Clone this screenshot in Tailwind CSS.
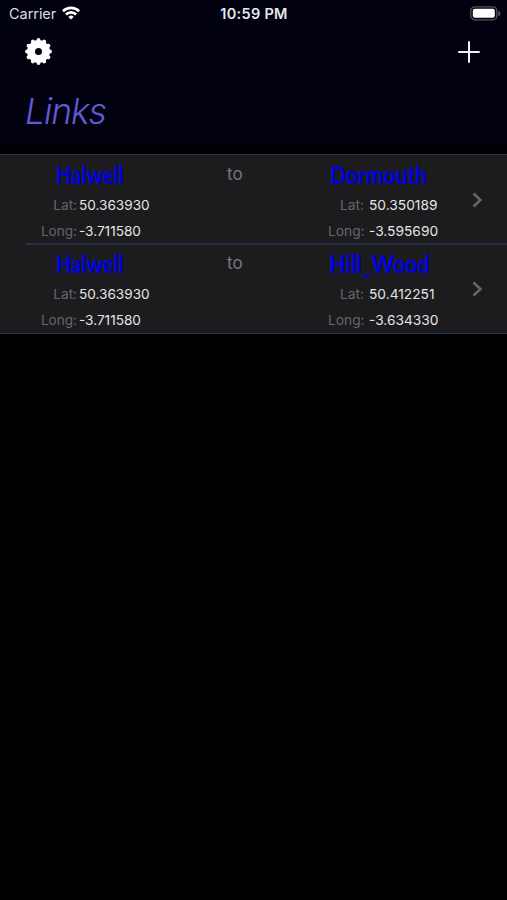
<!DOCTYPE html>
<html lang="en">
<head>
    <meta charset="UTF-8">
    <meta name="viewport" content="width=device-width, initial-scale=1.0">
    <title>Links</title>
    <script src="https://cdn.jsdelivr.net/npm/@tailwindcss/browser@4"></script>
</head>
<body class="bg-black min-h-screen overflow-hidden font-['Inter',sans-serif] text-white">
    <!-- Header -->
    <header class="bg-[#01010f] h-36">
        <!-- Status bar -->
        <div class="grid grid-cols-3 items-center h-7 pl-[9px] pr-[6px]">
            <div class="flex items-center gap-[6px]">
                <span class="text-[14.5px] leading-7 text-[#dcdce2] tracking-[-0.05px]">Carrier</span>
                <svg class="w-[18px] h-[14px] -mt-[2px]" viewBox="0 0 18 14" fill="none" stroke="white" stroke-width="2.6">
                    <path d="M0.9 5.2a11.6 11.6 0 0 1 16.2 0" />
                    <path d="M3.9 8.5a7.2 7.2 0 0 1 10.2 0" />
                    <path d="M9 13.6L6.3 10.9a3.8 3.8 0 0 1 5.4 0z" fill="white" stroke="none" />
                </svg>
            </div>
            <span class="text-center -ml-[2px] text-[14.5px] leading-7 font-semibold text-[#e8e8ee] tracking-[0.3px] whitespace-nowrap">10:59 PM</span>
            <svg class="w-[31px] h-[15px] justify-self-end -mt-[1px]" viewBox="0 0 31 15">
                <rect x="0.8" y="0.8" width="26" height="13" rx="4" fill="none" stroke="#55555f" stroke-width="1.3" />
                <rect x="2.8" y="2.8" width="22" height="9" rx="2" fill="white" />
                <path d="M28.3 4.8c3 1 3 4.4 0 5.4z" fill="#55555f" />
            </svg>
        </div>

        <!-- Toolbar -->
        <div class="flex items-center justify-between h-12 pl-[25px] pr-[27px]">
            <svg class="w-[27px] h-[27px] -mt-[2px]" viewBox="-13.5 -13.5 27 27">
                <g stroke="white" stroke-width="3.8" stroke-linecap="round">
                    <path d="M0 -11.5V11.5" />
                    <path d="M0 -11.5V11.5" transform="rotate(30)" />
                    <path d="M0 -11.5V11.5" transform="rotate(60)" />
                    <path d="M0 -11.5V11.5" transform="rotate(90)" />
                    <path d="M0 -11.5V11.5" transform="rotate(120)" />
                    <path d="M0 -11.5V11.5" transform="rotate(150)" />
                </g>
                <circle r="11.4" fill="white" />
                <circle r="3.5" fill="#01010f" />
            </svg>
            <svg class="w-[22px] h-[22px]" viewBox="0 0 22 22" stroke="#f0f0f6" stroke-width="2" stroke-linecap="round">
                <path d="M11 1v20M1 11h20" />
            </svg>
        </div>

        <h1 class="pl-[25px] pt-[12px] text-[35.5px] leading-12 italic font-[350] text-[#6259d6] tracking-[-1.1px]">Links</h1>
    </header>

    <!-- Links list -->
    <ul class="mt-[10px] bg-[#1c1c1e] border-y border-[#29374f] h-[180px]">
        <li class="flex h-[88px]">
            <div class="w-[227px] pt-[6px]">
                <div class="pl-[56px] h-[32px]"><span class="inline-block origin-left scale-x-[0.81] text-[25px] leading-[27px] font-['Lato',sans-serif] font-bold text-[#0000e4]">Halwell</span></div>
                <dl class="grid grid-cols-[77px_1fr] gap-x-[2px] text-[13.6px] leading-[25.5px]">
                    <dt class="text-right text-[#66666a]">Lat:</dt><dd class="text-[#e4e4e4]">50.363930</dd>
                    <dt class="text-right text-[#66666a]">Long:</dt><dd class="text-[#e4e4e4]">-3.711580</dd>
                </dl>
            </div>
            <span class="w-[101px] pt-[7px] text-[17px] leading-6 text-[#77777b]">to</span>
            <div class="w-[144px] pt-[6px]">
                <div class="pl-[2px] h-[32px]"><span class="inline-block origin-left scale-x-[0.84] text-[25px] leading-[27px] font-['Lato',sans-serif] font-bold text-[#0000e4]">Dormouth</span></div>
                <dl class="grid grid-cols-[36px_1fr] gap-x-[5px] text-[13.75px] leading-[25.5px]">
                    <dt class="text-right text-[#66666a]">Lat:</dt><dd class="text-[#e4e4e4]">50.350189</dd>
                    <dt class="text-right text-[#66666a]">Long:</dt><dd class="text-[#e4e4e4]">-3.595690</dd>
                </dl>
            </div>
            <svg class="w-[10px] h-[16px] self-center mt-[2px]" viewBox="0 0 10 16" fill="none" stroke="#68686c" stroke-width="2.4">
                <path d="M1.5 1.5L8.5 8l-7 6.5" />
            </svg>
        </li>
        <li class="flex h-[90px] relative before:absolute before:left-[26px] before:right-0 before:top-0 before:h-[2px] before:bg-[#263145]">
            <div class="w-[227px] pt-[7px]">
                <div class="pl-[56px] h-[32px]"><span class="inline-block origin-left scale-x-[0.81] text-[25px] leading-[27px] font-['Lato',sans-serif] font-bold text-[#0000e4]">Halwell</span></div>
                <dl class="grid grid-cols-[77px_1fr] gap-x-[2px] text-[13.6px] leading-[25.5px]">
                    <dt class="text-right text-[#66666a]">Lat:</dt><dd class="text-[#e4e4e4]">50.363930</dd>
                    <dt class="text-right text-[#66666a]">Long:</dt><dd class="text-[#e4e4e4]">-3.711580</dd>
                </dl>
            </div>
            <span class="w-[101px] pt-[8px] text-[17px] leading-6 text-[#77777b]">to</span>
            <div class="w-[144px] pt-[7px]">
                <div class="pl-[1px] h-[32px]"><span class="inline-block origin-left scale-x-[0.86] text-[25px] leading-[27px] font-['Lato',sans-serif] font-bold text-[#0000e4]">Hill_Wood</span></div>
                <dl class="grid grid-cols-[36px_1fr] gap-x-[5px] text-[13.75px] leading-[25.5px]">
                    <dt class="text-right text-[#66666a]">Lat:</dt><dd class="text-[#e4e4e4]">50.412251</dd>
                    <dt class="text-right text-[#66666a]">Long:</dt><dd class="text-[#e4e4e4]">-3.634330</dd>
                </dl>
            </div>
            <svg class="w-[10px] h-[16px] self-center mt-[2px]" viewBox="0 0 10 16" fill="none" stroke="#68686c" stroke-width="2.4">
                <path d="M1.5 1.5L8.5 8l-7 6.5" />
            </svg>
        </li>
    </ul>
</body>
</html>
